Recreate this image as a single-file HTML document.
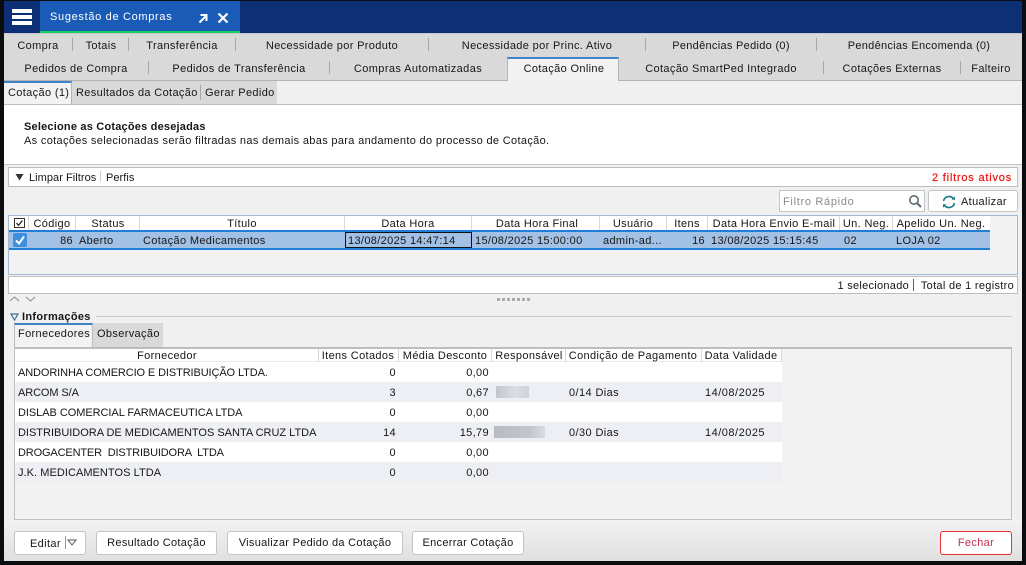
<!DOCTYPE html>
<html><head><meta charset="utf-8">
<style>
html,body{margin:0;padding:0;background:#0a0c0e;width:1026px;height:565px;overflow:hidden}
body{position:relative;font-family:"Liberation Sans",sans-serif;font-size:11px;color:#161616;letter-spacing:.35px}
div,span.t{position:absolute;box-sizing:border-box}
.t{white-space:nowrap;line-height:14px;transform-origin:left;margin-top:1px}
.c{transform:translateX(-50%)}
.r{transform:translateX(-100%)}
.s{background:#a9a9a9;width:1px;height:13px}
.h{background:#d8d8d8;width:1px;height:19px}
.btn{background:#fff;border:1px solid #c4c4c4;border-radius:3px;height:24px;top:531px;text-align:center;line-height:23px}
</style></head><body>
<div id="win" style="left:4px;top:1px;width:1018px;height:560px;background:#f0f0f0"></div>
<div style="left:4px;top:1px;width:1018px;height:32px;background:#0d2f75"></div>
<div style="left:40px;top:1px;width:200px;height:33px;background:#1a5bb8"></div>
<div style="left:40px;top:31px;width:200px;height:3px;background:#14d25f"></div>
<div style="left:12px;top:9px;width:20px;height:4px;background:#fff"></div>
<div style="left:12px;top:15px;width:20px;height:4px;background:#fff"></div>
<div style="left:12px;top:21px;width:20px;height:4px;background:#fff"></div>
<span class="t" style="left:50px;top:9px;color:#fff;letter-spacing:.68px">Sugestão de Compras</span>
<svg style="position:absolute;left:197px;top:12px" width="12" height="12" viewBox="0 0 12 12"><path d="M2.5 10.5 L8.5 4.5 M3.5 3 H9.5 V9" fill="none" stroke="#fff" stroke-width="2"/></svg>
<svg style="position:absolute;left:217px;top:12px" width="12" height="12" viewBox="0 0 12 12"><path d="M1.5 1.5 L10.5 10.5 M10.5 1.5 L1.5 10.5" fill="none" stroke="#fff" stroke-width="2.2"/></svg>

<div style="left:4px;top:33px;width:1018px;height:48px;background:#d9d9d9;border-top:1px solid #c8c8c8;border-bottom:1px solid #b4b4b4"></div>
<span class="t c" style="left:38px;top:38px">Compra</span>
<div class="s" style="left:72px;top:38px"></div>
<span class="t c" style="left:101px;top:38px">Totais</span>
<div class="s" style="left:128px;top:38px"></div>
<span class="t c" style="left:182px;top:38px">Transferência</span>
<div class="s" style="left:235px;top:38px"></div>
<span class="t c" style="left:332px;top:38px">Necessidade por Produto</span>
<div class="s" style="left:428px;top:38px"></div>
<span class="t c" style="left:537px;top:38px">Necessidade por Princ. Ativo</span>
<div class="s" style="left:645px;top:38px"></div>
<span class="t c" style="left:731px;top:38px;letter-spacing:.3px">Pendências Pedido (0)</span>
<div class="s" style="left:816px;top:38px"></div>
<span class="t c" style="left:919px;top:38px;letter-spacing:.28px">Pendências Encomenda (0)</span>

<span class="t c" style="left:76px;top:61px">Pedidos de Compra</span>
<div class="s" style="left:148px;top:61px"></div>
<span class="t c" style="left:239px;top:61px">Pedidos de Transferência</span>
<div class="s" style="left:329px;top:61px"></div>
<span class="t c" style="left:418px;top:61px;letter-spacing:.4px">Compras Automatizadas</span>
<div style="left:507px;top:57px;width:112px;height:24px;background:#f2f2f2;border-top:2px solid #3d85c8;border-left:1px solid #b4b4b4;border-right:1px solid #b4b4b4"></div>
<span class="t c" style="left:564px;top:61px">Cotação Online</span>
<span class="t c" style="left:721px;top:61px">Cotação SmartPed Integrado</span>
<div class="s" style="left:823px;top:61px"></div>
<span class="t c" style="left:892px;top:61px">Cotações Externas</span>
<div class="s" style="left:960px;top:61px"></div>
<span class="t c" style="left:991px;top:61px">Falteiro</span>

<div style="left:72px;top:81px;width:205px;height:23px;background:#d9d9d9"></div>
<div style="left:4px;top:81px;width:68px;height:24px;background:#f2f2f2;border-top:2px solid #3d85c8;border-right:1px solid #b4b4b4"></div>
<div class="s" style="left:200px;top:85px;height:15px"></div>
<span class="t" style="left:8px;top:85px">Cotação (1)</span>
<span class="t" style="left:76px;top:85px">Resultados da Cotação</span>
<span class="t" style="left:205px;top:85px">Gerar Pedido</span>

<div style="left:4px;top:104px;width:1018px;height:61px;background:#fff;border-top:1px solid #bdbdbd;border-bottom:1px solid #c4c4c4"></div>
<span class="t" style="left:24px;top:119px;font-weight:bold;letter-spacing:.2px">Selecione as Cotações desejadas</span>
<span class="t" style="left:24px;top:133px;letter-spacing:.33px">As cotações selecionadas serão filtradas nas demais abas para andamento do processo de Cotação.</span>

<div style="left:8px;top:167px;width:1010px;height:20px;background:#fff;border:1px solid #bdbdbd"></div>
<svg style="position:absolute;left:15px;top:173px" width="9" height="8" viewBox="0 0 9 8"><path d="M.5 1 H8.5 L4.5 7.5Z" fill="#333"/></svg>
<span class="t" style="left:29px;top:170px;letter-spacing:.05px">Limpar Filtros</span>
<div class="s" style="left:100px;top:171px;height:11px;background:#ccc"></div>
<span class="t" style="left:106px;top:170px;letter-spacing:.05px">Perfis</span>
<span class="t r" style="left:1012px;top:170px;color:#f01010;letter-spacing:.8px;-webkit-text-stroke:.2px #f01010">2 filtros ativos</span>

<div style="left:779px;top:190px;width:146px;height:22px;background:#fff;border:1px solid #c4c4c4"></div>
<span class="t" style="left:783px;top:194px;color:#8a8a8a;letter-spacing:.7px">Filtro Rápido</span>
<svg style="position:absolute;left:908px;top:194px" width="14" height="14" viewBox="0 0 14 14"><circle cx="6" cy="6" r="4.2" fill="none" stroke="#5f6d78" stroke-width="1.6"/><path d="M9 9 L13 13" stroke="#5f6d78" stroke-width="2"/></svg>
<div style="left:928px;top:190px;width:90px;height:22px;background:#fff;border:1px solid #c4c4c4;border-radius:3px"></div>
<svg style="position:absolute;left:942px;top:195px" width="14" height="14" viewBox="0 0 14 14"><path d="M1.5 6 A5.6 5.6 0 0 1 11.5 3.8" fill="none" stroke="#1f7a8c" stroke-width="1.7"/><path d="M12.5 8 A5.6 5.6 0 0 1 2.5 10.2" fill="none" stroke="#1f7a8c" stroke-width="1.7"/><path d="M9.5 4.8 H13 V1.2Z M4.5 9.2 H1 V12.8Z" fill="#1f7a8c"/></svg>
<span class="t" style="left:961px;top:194px">Atualizar</span>

<!-- top grid -->
<div style="left:8px;top:215px;width:1010px;height:60px;background:#f2f2f2;border:1px solid #9fb9d6"></div>
<div style="left:9px;top:216px;width:981px;height:14px;background:#fff"></div>
<div style="left:9px;top:230px;width:981px;height:20px;background:#a3c1e5;border-top:2px solid #1f7fd4;border-bottom:2px solid #1f7fd4"></div>
<div class="h" style="left:28px;top:216px;height:14px"></div>
<div class="h" style="left:75px;top:216px;height:14px"></div>
<div class="h" style="left:139px;top:216px;height:14px"></div>
<div class="h" style="left:344px;top:216px;height:14px"></div>
<div class="h" style="left:471px;top:216px;height:14px"></div>
<div class="h" style="left:599px;top:216px;height:14px"></div>
<div class="h" style="left:666px;top:216px;height:14px"></div>
<div class="h" style="left:707px;top:216px;height:14px"></div>
<div class="h" style="left:839px;top:216px;height:14px"></div>
<div class="h" style="left:892px;top:216px;height:14px"></div>
<div style="left:14px;top:218px;width:11px;height:10px;background:#fff;border:1px solid #333"></div>
<svg style="position:absolute;left:15px;top:219px" width="9" height="8" viewBox="0 0 9 8"><path d="M1.5 4 L3.5 6.3 L7.5 1.5" fill="none" stroke="#222" stroke-width="1.3"/></svg>
<span class="t c" style="left:52px;top:216px">Código</span>
<span class="t c" style="left:108px;top:216px">Status</span>
<span class="t c" style="left:242px;top:216px">Título</span>
<span class="t c" style="left:408px;top:216px">Data Hora</span>
<span class="t c" style="left:537px;top:216px">Data Hora Final</span>
<span class="t c" style="left:633px;top:216px">Usuário</span>
<span class="t c" style="left:687px;top:216px">Itens</span>
<span class="t c" style="left:774px;top:216px">Data Hora Envio E-mail</span>
<span class="t c" style="left:866px;top:216px">Un. Neg.</span>
<span class="t c" style="left:941px;top:216px">Apelido Un. Neg.</span>

<div style="left:13px;top:233px;width:14px;height:14px;background:#3d8fe0;border-radius:2px"></div>
<svg style="position:absolute;left:14px;top:234px" width="12" height="12" viewBox="0 0 12 12"><path d="M2 6.5 L5 9.5 L10 2.5" fill="none" stroke="#fff" stroke-width="2"/></svg>
<span class="t r" style="left:73px;top:233px">86</span>
<span class="t" style="left:79px;top:233px">Aberto</span>
<span class="t" style="left:143px;top:233px">Cotação Medicamentos</span>
<div style="left:345px;top:232px;width:127px;height:16px;border:1px solid #111"></div>
<span class="t" style="left:348px;top:233px">13/08/2025 14:47:14</span>
<span class="t" style="left:475px;top:233px">15/08/2025 15:00:00</span>
<span class="t" style="left:603px;top:233px">admin-ad...</span>
<span class="t r" style="left:705px;top:233px">16</span>
<span class="t" style="left:711px;top:233px">13/08/2025 15:15:45</span>
<span class="t" style="left:844px;top:233px">02</span>
<span class="t" style="left:896px;top:233px">LOJA 02</span>

<div style="left:8px;top:276px;width:1010px;height:18px;background:#fff;border:1px solid #bdbdbd"></div>
<span class="t r" style="left:909px;top:278px;letter-spacing:.28px">1 selecionado</span>
<div style="left:913px;top:279px;width:1px;height:12px;background:#2a6fb5"></div>
<span class="t r" style="left:1014px;top:278px;letter-spacing:.3px">Total de 1 registro</span>

<svg style="position:absolute;left:9px;top:295px" width="28" height="8" viewBox="0 0 28 8"><path d="M1 6 L5.5 2 L10 6 M17 2 L21.5 6 L26 2" fill="none" stroke="#8a8a8a" stroke-width="1"/></svg>
<div style="left:497px;top:298px;width:33px;height:3px;background:repeating-linear-gradient(90deg,#aaa 0 3px,transparent 3px 5px)"></div>

<svg style="position:absolute;left:10px;top:313px" width="9" height="8" viewBox="0 0 9 8"><path d="M1 1 H8 L4.5 7Z" fill="none" stroke="#3f6f8f" stroke-width="1.2"/></svg>
<span class="t" style="left:22px;top:309px;font-weight:bold;letter-spacing:.3px">Informações</span>
<div style="left:96px;top:316px;width:916px;height:1px;background:#c8c8c8"></div>

<div style="left:92px;top:323px;width:71px;height:24px;background:#d9d9d9"></div>
<div style="left:14px;top:323px;width:79px;height:25px;background:#f2f2f2;border-top:2px solid #3d85c8;border-left:1px solid #bdbdbd;border-right:1px solid #bdbdbd"></div>
<span class="t" style="left:18px;top:326px">Fornecedores</span>
<span class="t" style="left:97px;top:326px">Observação</span>

<div style="left:14px;top:347px;width:998px;height:173px;background:#f2f2f2;border:1px solid #c0c0c0;border-top:2px solid #bdbdbd"></div>
<div style="left:93px;top:347px;width:919px;height:1px;background:#bdbdbd"></div>
<div style="left:15px;top:349px;width:767px;height:13px;background:#fff"></div>
<div style="left:15px;top:362px;width:767px;height:20px;background:#fff"></div>
<div style="left:15px;top:382px;width:767px;height:20px;background:#eeeff5"></div>
<div style="left:15px;top:402px;width:767px;height:20px;background:#fff"></div>
<div style="left:15px;top:422px;width:767px;height:20px;background:#eeeff5"></div>
<div style="left:15px;top:442px;width:767px;height:20px;background:#fff"></div>
<div style="left:15px;top:462px;width:767px;height:20px;background:#eeeff5"></div>
<div style="left:15px;top:361px;width:767px;height:1px;background:#e8e8e8"></div>
<div class="h" style="left:318px;top:349px;height:13px"></div>
<div class="h" style="left:398px;top:349px;height:13px"></div>
<div class="h" style="left:491px;top:349px;height:13px"></div>
<div class="h" style="left:565px;top:349px;height:13px"></div>
<div class="h" style="left:701px;top:349px;height:13px"></div>
<div class="h" style="left:781px;top:349px;height:13px"></div>
<span class="t c" style="left:167px;top:348px">Fornecedor</span>
<span class="t c" style="left:358px;top:348px">Itens Cotados</span>
<span class="t c" style="left:445px;top:348px">Média Desconto</span>
<span class="t c" style="left:529px;top:348px">Responsável</span>
<span class="t c" style="left:633px;top:348px">Condição de Pagamento</span>
<span class="t c" style="left:741px;top:348px">Data Validade</span>

<span class="t" style="left:18px;top:365px;letter-spacing:-.11px">ANDORINHA COMERCIO E DISTRIBUIÇÃO LTDA.</span>
<span class="t" style="left:18px;top:385px;letter-spacing:-.1px">ARCOM S/A</span>
<span class="t" style="left:18px;top:405px;letter-spacing:-.05px">DISLAB COMERCIAL FARMACEUTICA LTDA</span>
<span class="t" style="left:18px;top:425px;letter-spacing:-.01px">DISTRIBUIDORA DE MEDICAMENTOS SANTA CRUZ LTDA</span>
<span class="t" style="left:18px;top:445px;white-space:pre;letter-spacing:-.15px">DROGACENTER  DISTRIBUIDORA  LTDA</span>
<span class="t" style="left:18px;top:465px;letter-spacing:.05px">J.K. MEDICAMENTOS LTDA</span>
<span class="t r" style="left:396px;top:365px">0</span>
<span class="t r" style="left:396px;top:385px">3</span>
<span class="t r" style="left:396px;top:405px">0</span>
<span class="t r" style="left:396px;top:425px">14</span>
<span class="t r" style="left:396px;top:445px">0</span>
<span class="t r" style="left:396px;top:465px">0</span>
<span class="t r" style="left:489px;top:365px">0,00</span>
<span class="t r" style="left:489px;top:385px">0,67</span>
<span class="t r" style="left:489px;top:405px">0,00</span>
<span class="t r" style="left:489px;top:425px">15,79</span>
<span class="t r" style="left:489px;top:445px">0,00</span>
<span class="t r" style="left:489px;top:465px">0,00</span>
<div style="left:496px;top:386px;width:33px;height:12px;background:linear-gradient(90deg,#c4c4cc,#dcdce4 60%,#d0d0da)"></div>
<div style="left:494px;top:426px;width:51px;height:12px;background:linear-gradient(90deg,#b9b9c0,#c4c4cc 70%,#d8d9e4)"></div>
<span class="t" style="left:569px;top:385px;letter-spacing:.4px">0/14 Dias</span>
<span class="t" style="left:569px;top:425px;letter-spacing:.4px">0/30 Dias</span>
<span class="t" style="left:705px;top:385px;letter-spacing:.5px">14/08/2025</span>
<span class="t" style="left:705px;top:425px;letter-spacing:.5px">14/08/2025</span>

<div style="left:4px;top:520px;width:1018px;height:41px;background:linear-gradient(#f2f2f2,#e0e0e0)"></div>
<div class="btn" style="left:14px;width:72px"></div>
<span class="t" style="left:30px;top:536px">Editar</span>
<div style="left:65px;top:536px;width:1px;height:13px;background:#999"></div>
<svg style="position:absolute;left:67px;top:539px" width="10" height="7" viewBox="0 0 10 7"><path d="M1 1 H9 L5 6Z" fill="none" stroke="#555" stroke-width="1"/></svg>
<div class="btn" style="left:96px;width:121px;letter-spacing:.3px">Resultado Cotação</div>
<div class="btn" style="left:227px;width:176px;letter-spacing:.3px">Visualizar Pedido da Cotação</div>
<div class="btn" style="left:412px;width:112px;letter-spacing:.3px">Encerrar Cotação</div>
<div class="btn" style="left:940px;width:72px;border-color:#ee3030;color:#c03050">Fechar</div>
</body></html>
